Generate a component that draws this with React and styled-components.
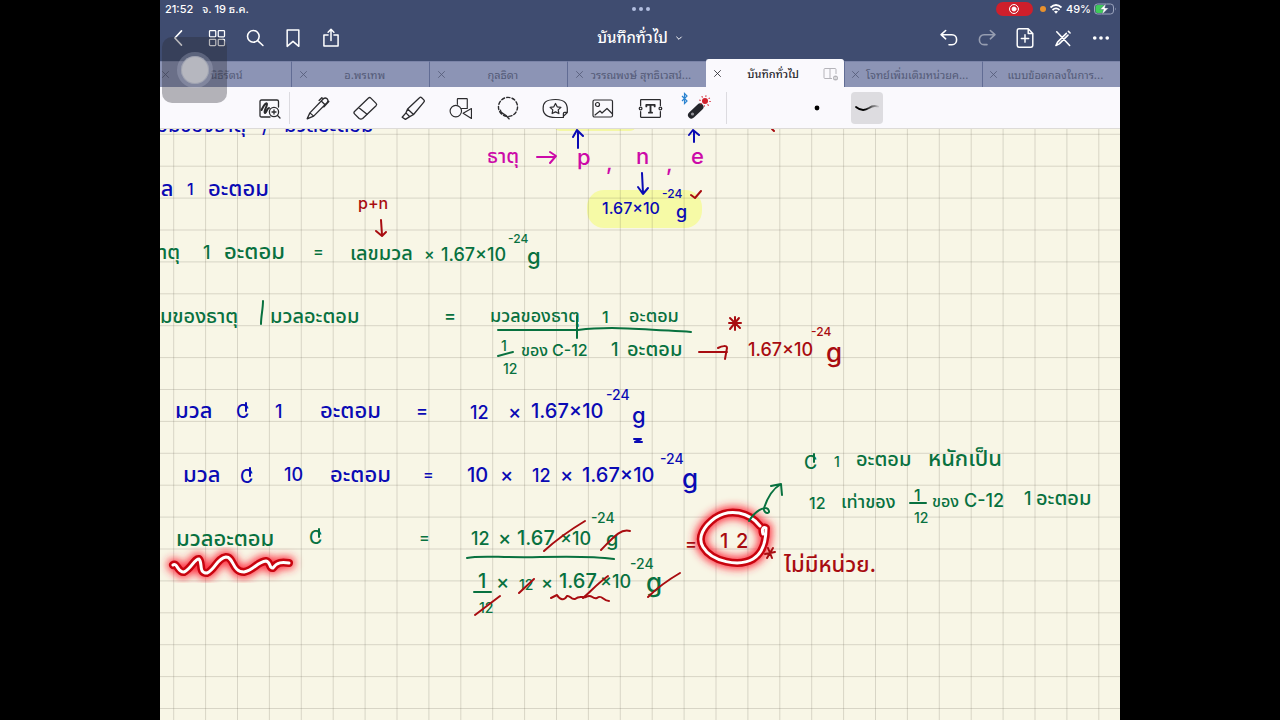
import React from 'react';
import styled, { createGlobalStyle } from 'styled-components';

const GlobalStyle = createGlobalStyle`
  * {
    box-sizing: border-box;
  }

  body {
    margin: 0;
    background: #000;
    font-family: Inter, "Noto Sans Thai Looped", "Noto Looped Thai", "Noto Sans Thai", "Noto Sans", sans-serif;
  }
`;

const Tablet = styled.div`
  position: relative;
  display: flex;
  flex-direction: column;
  width: 75%;
  height: 100vh;
  margin: 0 auto;
  overflow: hidden;
  background: #f8f6e6;
`;

const Header = styled.header`
  background: #3f4c70;
  color: #fff;
`;

const StatusBar = styled.div`
  display: grid;
  grid-template-columns: 1fr auto 1fr;
  align-items: center;
  height: 18px;
  padding: 0 3px 0 5px;
  font-size: 11px;
  font-weight: 500;
  line-height: 18px;
`;

const Clock = styled.div`
  display: flex;
  gap: 9px;
  white-space: nowrap;
`;

const Dots = styled.div`
  display: flex;
  gap: 3px;

  i {
    width: 4px;
    height: 4px;
    border-radius: 50%;
    background: #b3bfe0;
  }
`;

const Indicators = styled.div`
  display: flex;
  align-items: center;
  justify-content: flex-end;
  gap: 3px;
`;

const RecordPill = styled.div`
  display: flex;
  align-items: center;
  justify-content: center;
  width: 37px;
  height: 14px;
  margin-right: 4px;
  border-radius: 7px;
  background: #cf1f2b;
`;

const MicDot = styled.i`
  width: 6px;
  height: 6px;
  border-radius: 50%;
  background: #e8912d;
`;

const NavBar = styled.div`
  display: grid;
  grid-template-columns: 1fr auto 1fr;
  align-items: center;
  height: 40px;
`;

const NavGroup = styled.div`
  display: flex;
  justify-content: ${({ $end }) => ($end ? 'flex-end' : 'flex-start')};
`;

const PlainButton = styled.button`
  display: flex;
  align-items: center;
  justify-content: center;
  margin: 0;
  padding: 0;
  border: 0;
  background: none;
  color: inherit;
  font: inherit;
`;

const NavButton = styled(PlainButton)`
  width: 38px;
  height: 38px;
  opacity: ${({ disabled }) => (disabled ? 0.45 : 1)};
  color: #fff;
`;

const TitleButton = styled(PlainButton)`
  gap: 7px;
  font-size: 15px;
  font-weight: 500;
  line-height: 38px;
`;

const Tabs = styled.nav`
  display: flex;
  align-items: flex-end;
  height: 29px;
  margin-left: -7px;
`;

const Tab = styled.div`
  display: flex;
  flex: 1;
  align-items: center;
  min-width: 0;
  height: ${({ $active }) => ($active ? '28px' : '26px')};
  padding: 0 5px;
  border-left: 1px solid ${({ $active }) => ($active ? '#faf9fd' : '#616c94')};
  border-top: 1px solid ${({ $active }) => ($active ? '#faf9fd' : '#7b84a8')};
  border-radius: ${({ $active }) => ($active ? '3px 3px 0 0' : '0')};
  background: ${({ $active }) => ($active ? '#faf9fd' : '#8c94b5')};
  color: ${({ $active }) => ($active ? '#26262c' : '#545b78')};
`;

const TabClose = styled(PlainButton)`
  width: 12px;
  height: 20px;
`;

const TabTitle = styled.a`
  flex: 1;
  min-width: 0;
  color: inherit;
  font-size: 11px;
  font-weight: ${({ $active }) => ($active ? 500 : 400)};
  line-height: 22px;
  text-align: center;
  text-decoration: none;
  white-space: nowrap;
`;

const TabSide = styled.span`
  display: flex;
  width: ${({ $wide }) => ($wide ? '16px' : '4px')};
`;

const Toolbar = styled.div`
  display: flex;
  align-items: center;
  height: 42px;
  padding-top: 1px;
  border-bottom: 1px solid #dddbd8;
  background: #faf9fd;
  color: #2b2b2e;
`;

const ZoomTool = styled(PlainButton)`
  width: 38px;
  height: 40px;
  margin-left: 91px;
`;

const Divider = styled.i`
  width: 1px;
  height: 32px;
  background: #dcdbe0;
`;

const Tools = styled.div`
  display: flex;
  width: 428px;
  margin: 0 4px;
`;

const ToolButton = styled(PlainButton)`
  flex: 1;
  height: 40px;
`;

const StrokeStyles = styled.div`
  display: flex;
  align-items: center;
  gap: 18px;
  margin-left: 74px;
`;

const StyleButton = styled(PlainButton)`
  width: 32px;
  height: 32px;
  border-radius: 4px;
  background: ${({ $active }) => ($active ? '#dddce0' : 'none')};
`;

const Page = styled.main`
  flex: 1;
  min-height: 0;
`;

const Paper = styled.svg`
  display: block;
  width: 100%;
  height: 100%;
`;

const Written = styled.text`
  fill: ${({ $ink }) => $ink};
  font-family: Inter, "Noto Sans Thai", "Noto Sans", sans-serif;
  font-size: ${({ $size }) => $size}px;
  font-weight: 500;
`;

const Stroke = styled.path`
  fill: none;
  stroke: ${({ $ink }) => $ink};
  stroke-width: ${({ $width }) => $width || 2};
  stroke-linecap: round;
  stroke-linejoin: round;
`;

const AssistiveTouch = styled.button`
  position: absolute;
  top: 37px;
  left: 2px;
  display: flex;
  align-items: center;
  justify-content: center;
  width: 65px;
  height: 66px;
  padding: 0;
  border: 0;
  border-radius: 10px;
  background: rgba(40, 40, 50, 0.34);
`;

const TouchRing = styled.span`
  width: 36px;
  height: 36px;
  border: 4px solid rgba(190, 195, 215, 0.28);
  border-radius: 50%;
  background: #b6b7bf;
  background-clip: padding-box;
  box-shadow: inset 0 0 0 1px rgba(140, 145, 165, 0.5);
`;

const Icon = ({ size = 24, width = 1.5, children }) => (
  <svg width={size} height={size} viewBox="0 0 24 24" fill="none" stroke="currentColor"
    strokeWidth={width} strokeLinecap="round" strokeLinejoin="round" aria-hidden="true">
    {children}
  </svg>
);

const BLUE = '#0a0ab4';
const GREEN = '#08713f';
const PINK = '#cc0aa8';
const RED = '#a80c10';

// text, x, baseline, size, ink
const notes = [
  ['มวลอะตอมของธาตุ', 91, 132, 20, BLUE],
  ['/', 262, 133, 18, BLUE],
  ['มวลอะตอม', 284, 132, 20, BLUE],
  ['มวล', 136, 196, 22, BLUE],
  ['1', 187, 195, 16, BLUE],
  ['อะตอม', 208, 196, 22, BLUE],
  ['ธาตุ', 487, 163, 20, PINK],
  ['p', 577, 165, 22, PINK],
  [',', 606, 170, 22, PINK],
  ['n', 636, 164, 22, PINK],
  [',', 666, 171, 22, PINK],
  ['e', 691, 164, 22, PINK],
  ['1.67×10', 602, 214, 16, BLUE],
  ['-24', 662, 198, 12, BLUE],
  ['g', 676, 218, 18, BLUE],
  ['p+n', 358, 209, 16, RED],
  ['ธาตุ', 148, 259, 20, GREEN],
  ['1', 203, 259, 18, GREEN],
  ['อะตอม', 224, 259, 22, GREEN],
  ['=', 313, 257, 16, GREEN],
  ['เลขมวล', 350, 260, 20, GREEN],
  ['×', 424, 260, 16, GREEN],
  ['1.67×10', 441, 261, 18, GREEN],
  ['-24', 508, 243, 12, GREEN],
  ['g', 527, 264, 22, GREEN],
  ['อะตอมของธาตุ', 117, 323, 20, GREEN],
  ['มวลอะตอม', 270, 323, 20, GREEN],
  ['=', 444, 322, 18, GREEN],
  ['มวลของธาตุ', 490, 322, 18, GREEN],
  ['1', 602, 323, 16, GREEN],
  ['อะตอม', 629, 322, 18, GREEN],
  ['1', 501, 351, 14, GREEN],
  ['12', 503, 374, 14, GREEN],
  ['ของ', 521, 356, 16, GREEN],
  ['C-12', 552, 356, 16, GREEN],
  ['1', 611, 356, 18, GREEN],
  ['อะตอม', 627, 356, 20, GREEN],
  ['1.67×10', 748, 356, 18, RED],
  ['-24', 811, 336, 12, RED],
  ['g', 826, 362, 26, RED],
  ['มวล', 175, 418, 22, BLUE],
  ['C', 236, 418, 18, BLUE],
  ['1', 275, 418, 18, BLUE],
  ['อะตอม', 320, 418, 22, BLUE],
  ['=', 416, 417, 18, BLUE],
  ['12', 470, 419, 18, BLUE],
  ['×', 508, 419, 20, BLUE],
  ['1.67×10', 531, 418, 20, BLUE],
  ['-24', 606, 400, 14, BLUE],
  ['g', 632, 423, 22, BLUE],
  ['มวล', 183, 482, 22, BLUE],
  ['C', 240, 483, 18, BLUE],
  ['10', 284, 481, 18, BLUE],
  ['อะตอม', 330, 482, 22, BLUE],
  ['=', 423, 480, 16, BLUE],
  ['10', 467, 482, 20, BLUE],
  ['×', 500, 482, 20, BLUE],
  ['12', 532, 482, 18, BLUE],
  ['×', 560, 482, 20, BLUE],
  ['1.67×10', 582, 482, 20, BLUE],
  ['-24', 660, 464, 14, BLUE],
  ['g', 682, 488, 26, BLUE],
  ['มวลอะตอม', 176, 546, 22, GREEN],
  ['C', 309, 544, 18, GREEN],
  ['=', 419, 543, 16, GREEN],
  ['12', 471, 545, 18, GREEN],
  ['×', 498, 545, 20, GREEN],
  ['1.67', 517, 545, 20, GREEN],
  ['×10', 560, 545, 18, GREEN],
  ['-24', 591, 523, 14, GREEN],
  ['g', 606, 546, 20, GREEN],
  ['1', 478, 588, 20, GREEN],
  ['12', 479, 613, 14, GREEN],
  ['×', 496, 589, 20, GREEN],
  ['12', 519, 590, 14, GREEN],
  ['×', 541, 589, 18, GREEN],
  ['1.67', 559, 588, 20, GREEN],
  ['×10', 600, 588, 18, GREEN],
  ['-24', 630, 569, 14, GREEN],
  ['g', 646, 592, 26, GREEN],
  ['=', 685, 550, 18, RED],
  ['1', 720, 548, 20, RED],
  ['2', 736, 548, 20, RED],
  ['C', 804, 469, 18, GREEN],
  ['1', 834, 467, 14, GREEN],
  ['อะตอม', 856, 466, 20, GREEN],
  ['หนักเป็น', 928, 466, 22, GREEN],
  ['12', 809, 509, 16, GREEN],
  ['เท่าของ', 841, 508, 18, GREEN],
  ['1', 914, 501, 16, GREEN],
  ['12', 914, 523, 14, GREEN],
  ['ของ', 932, 507, 16, GREEN],
  ['C-12', 964, 507, 18, GREEN],
  ['1', 1024, 505, 18, GREEN],
  ['อะตอม', 1036, 505, 20, GREEN],
  ['ไม่มีหน่วย.', 784, 572, 22, RED],
];

const strokes = [
  [BLUE, 'M578 148V131M573 137L577 130L583 136'],
  [BLUE, 'M694 142V131M689 135L693 130L699 135'],
  [PINK, 'M537 157H555M550 152L556 156L550 163'],
  [BLUE, 'M642 173L643 193M638 187L643 194L648 188'],
  [RED, 'M691 195L695 198L701 191M772 129L774 131'],
  [RED, 'M381 220L382 235M376 231L382 236L386 232'],
  [GREEN, 'M263 301C263 309 261 316 261 324'],
  [GREEN, 'M498 330H578C610 326 640 329 691 332M577 316V338'],
  [GREEN, 'M498 356L513 352'],
  [RED, 'M699 352H727M718 348C722 346 727 345 727 348L725 359'],
  [RED, 'M730 318L740 328M739 318L730 329M729 323H741M735 317V330'],
  [BLUE, 'M634 439H641L635 442H642'],
  [GREEN, 'M467 558C480 555 500 558 540 557S600 557 614 559'],
  [GREEN, 'M474 592H491'],
  [RED, 'M544 551C555 541 570 530 585 521'],
  [RED, 'M601 550C612 539 620 528 630 531'],
  [RED, 'M475 615L500 596M519 593L534 579'],
  [RED, 'M583 598C590 592 597 584 608 576M648 597C656 589 668 580 680 573'],
  [RED, 'M551 598L557 595C560 600 564 601 567 596C570 595 571 600 575 599C580 595 582 598 586 597C592 593 592 600 597 598C602 594 603 601 609 601'],
  [GREEN, 'M749 521C755 511 764 506 768 509C772 515 763 514 764 508C768 496 774 488 781 484M771 486L781 484L782 495'],
  [GREEN, 'M910 503H926'],
  [RED, 'M765 554L775 552M768 548L772 558M773 548L767 558'],
  // crossbars on the carbon symbols
  [BLUE, 'M246 403V411M250 468V476'],
  [GREEN, 'M319 529V537M814 454V462'],
];

const laser = [
  'M173 565C177 562 178 573 184 572C191 569 195 558 199 559C203 563 198 573 207 573C215 570 217 558 226 557C234 557 232 572 244 572C254 570 257 562 266 561C271 562 269 569 273 568C277 562 282 562 289 563',
  'M760 526C749 512 730 508 715 518C704 526 697 537 703 547C712 562 739 567 753 559C763 553 766 541 766 528C762 526 762 531 763 534',
];

// squares of the page, drawn well past the edges of a wide window
const GRID_STEP = 31.9;
const gridPath = Array.from({ length: 80 }, (_, i) => {
  const x = 13.7 + i * GRID_STEP;
  const y = 5.3 + i * GRID_STEP;
  return `M${x} 0V2600M0 ${y}H2600`;
}).join('');

const ZoomIcon = () => (
  <Icon size={24} width={1.3}>
    <path d="M12 21H3.500Q2 21 2 19.500V5.500Q2 4 3.500 4H19Q20.500 4 20.500 5.500V11" />
    <path d="M3.500 14C6 9 8 6 9 8C9 11 5 16 7 17C9 16 9 12 11 12" strokeWidth="2" />
    <circle cx="16" cy="16" r="4.600" />
    <path d="M19.500 19.500L22 22M16 14V18M14 16H18" />
  </Icon>
);

const tools = [
  ['Pen', (
    <Icon size={26} width={1.2}>
      <path d="M2 22L4.500 16.500L17 3.500Q18.500 2 20.500 3.500Q22 5.500 20.500 7L8 19.500L2 22ZM15 5.500L18.500 9M4.500 16.500L8 19.500M13 5L15.500 2.500L17 3.500M22 6L17.500 11" />
    </Icon>
  )],
  ['Eraser', (
    <Icon size={28} width={1.1}>
      <path d="M3 15L15 3.500Q16 2.500 17 3.500L21.500 8Q22.500 9 21.500 10L10 21Q8.500 22 7 21L3 17Q2 16 3 15ZM6.500 11.500L14 17.500" />
    </Icon>
  )],
  ['Highlighter', (
    <Icon size={26} width={1.2}>
      <path d="M7 13L18 2.500Q19 1.500 20 2.500L22 4.500Q23 5.500 22 6.500L12.500 18M7 13L12.500 18M7 13L5.500 16.500L9 20L12.500 18M5.500 16.500L2 20.500L5 22.500L9 20" />
    </Icon>
  )],
  ['Shapes', (
    <Icon size={25} width={1.1}>
      <path d="M9 8V3Q9 2.500 9.500 2.500H18Q18.500 2.500 18.500 3V12H13" />
      <circle cx="7.500" cy="14.500" r="5.500" />
      <path d="M14.500 16.500L22.500 12V21.500Z" />
    </Icon>
  )],
  ['Lasso', (
    <Icon size={26} width={1.3}>
      <circle cx="12" cy="11" r="8.800" strokeDasharray="3 2" />
      <path d="M5 14C5 18 9 16 13 22" />
    </Icon>
  )],
  ['Elements', (
    <Icon size={27} width={1.1}>
      <path d="M19 19L22.500 15.500C23 8 21 4 12 4S1 7 1 12S4 20 12 20H19V16.500Q19 15.500 20 15.500H22.500" />
      <path d="M12 7.500L13.500 10.500L16.800 11L14.400 13.200L15 16.500L12 15L9 16.500L9.600 13.200L7.200 11L10.500 10.500Z" />
    </Icon>
  )],
  ['Image', (
    <Icon size={24} width={1.2}>
      <rect x="2" y="4" width="19.500" height="17" rx="1.500" />
      <circle cx="6.500" cy="8.500" r="2" />
      <path d="M4 19L9 15L11 17L16 12.500L21 17.500" />
    </Icon>
  )],
  ['Text', (
    <Icon size={25} width={1.2}>
      <path d="M2.500 9V4Q2.500 3.500 3 3.500H21Q21.500 3.500 21.500 4V9M2.500 15V20Q2.500 20.500 3 20.500H21Q21.500 20.500 21.500 20V15" />
      <circle cx="2.500" cy="12" r="1.300" />
      <circle cx="21.500" cy="12" r="1.300" />
      <path d="M8 10V8.500H16V10M12 8.500V16M10.500 16H13.500" strokeWidth="1.800" />
    </Icon>
  )],
  ['Laser pointer', (
    <svg width="36" height="32" viewBox="0 0 36 32" fill="none" aria-hidden="true">
      <path d="M2 4L7 9L4.500 11.500V1.500L7 4L2 9" stroke="#2a83d0" strokeWidth="1.200" />
      <path d="M11.500 23L20 15" stroke="#25262c" strokeWidth="7" strokeLinecap="round" />
      <circle cx="12.500" cy="22" r="1.600" fill="#93949a" />
      <circle cx="25" cy="9" r="3" fill="#d2202c" />
      <circle cx="25" cy="9" r="5" stroke="#d2202c" strokeWidth="1.500" strokeDasharray="1 2.900" />
    </svg>
  )],
];

const tabs = [
  'นิธิรัตน์',
  'อ.พรเทพ',
  'กุลธิดา',
  'วรรณพงษ์ สุทธิเวสน์...',
  'บันทึกทั่วไป',
  'โจทย์เพิ่มเติมหน่วยค...',
  'แบบข้อตกลงในการ...',
];

const Notebook = () => (
  <Page>
    <Paper>
      <defs>
        <filter id="glow" x="-30%" y="-60%" width="160%" height="220%">
          <feGaussianBlur stdDeviation="4" />
        </filter>
      </defs>
      <rect x="394" y="-10" width="82" height="12" rx="6" fill="#f4f7a6" />
      <rect x="427" y="61" width="115" height="38" rx="17" fill="#f6faa6" />
      <Stroke d={gridPath} $ink="rgba(90, 85, 70, 0.2)" $width={1} />
      <g transform="translate(-160 -129)">
        {laser.map((d) => (
          <g key={d}>
            <Stroke d={d} $ink="#ff2a3c" $width={12} filter="url(#glow)" />
            <Stroke d={d} $ink="#c8040f" $width={8} />
            <Stroke d={d} $ink="#fff" $width={3} />
          </g>
        ))}
        {notes.map(([text, x, y, size, ink]) => (
          <Written key={`${x}-${y}`} x={x} y={y} $size={size} $ink={ink}>{text}</Written>
        ))}
        {strokes.map(([ink, d]) => (
          <Stroke key={d} d={d} $ink={ink} />
        ))}
      </g>
    </Paper>
  </Page>
);

const App = () => (
  <Tablet>
    <GlobalStyle />
    <Header>
      <StatusBar>
        <Clock><span>21:52</span><span>จ. 19 ธ.ค.</span></Clock>
        <Dots><i /><i /><i /></Dots>
        <Indicators>
          <RecordPill>
            <Icon size={12} width={2}><circle cx="12" cy="12" r="9" /><circle cx="12" cy="12" r="4" fill="#fff" /></Icon>
          </RecordPill>
          <MicDot />
          <svg width="14" height="12" viewBox="0 0 14 12" fill="none" stroke="#fff" strokeWidth="1.800" aria-hidden="true">
            <path d="M1.500 4.500Q7 -0.500 12.500 4.500M3.500 7Q7 3.800 10.500 7" />
            <path d="M5 8.500Q7 7 9 8.500L7 10.800Z" fill="#fff" stroke="none" />
          </svg>
          <span>49%</span>
          <svg width="23" height="12" viewBox="0 0 23 12" aria-hidden="true">
            <rect x="0.500" y="1" width="19" height="10" rx="3" fill="none" stroke="#9aa3bd" />
            <path d="M21 4.500Q22.500 6 21 7.500Z" fill="#9aa3bd" />
            <rect x="1.500" y="2" width="9" height="8" rx="2" fill="#3ecb5a" />
            <path d="M12 0.500L6 6.500H9.500L8 11.500L14.500 5H10.800Z" fill="#fff" stroke="#3f4c70" strokeWidth="0.400" />
          </svg>
        </Indicators>
      </StatusBar>
      <NavBar>
        <NavGroup>
          <NavButton aria-label="Back"><Icon size={20}><path d="M15 3.500L7 12L15 20.500" strokeWidth="1.900" /></Icon></NavButton>
          <NavButton aria-label="Thumbnails">
            <Icon size={20}>
              <rect x="3" y="3" width="7.500" height="7.500" rx="1" />
              <rect x="13.500" y="3" width="7.500" height="7.500" rx="1" />
              <rect x="3" y="13.500" width="7.500" height="7.500" rx="1" />
              <rect x="13.500" y="13.500" width="7.500" height="7.500" rx="1" />
            </Icon>
          </NavButton>
          <NavButton aria-label="Search">
            <Icon size={20} width={1.9}><circle cx="10" cy="10" r="7" /><path d="M15.500 15.500L21.500 21" /></Icon>
          </NavButton>
          <NavButton aria-label="Bookmark">
            <Icon size={20} width={1.8}><path d="M5 2.500H19V22L12 16L5 22Z" /></Icon>
          </NavButton>
          <NavButton aria-label="Share">
            <Icon size={20} width={1.8}><path d="M8.500 8.500H3.500V21.500H20.500V8.500H15.500M12 15V2M8.500 5L12 1.500L15.500 5" /></Icon>
          </NavButton>
        </NavGroup>
        <TitleButton>
          บันทึกทั่วไป
          <Icon size={8} width={3}><path d="M5 9L12 16L19 9" /></Icon>
        </TitleButton>
        <NavGroup $end>
          <NavButton aria-label="Undo">
            <Icon size={20} width={1.9}><path d="M8 3L2.500 8L8 13M3 8H15.500C23 8 23 20 15.500 20H12" /></Icon>
          </NavButton>
          <NavButton aria-label="Redo" disabled>
            <Icon size={20} width={1.9}><path d="M16 3L21.500 8L16 13M21 8H8.500C1 8 1 20 8.500 20H12" /></Icon>
          </NavButton>
          <NavButton aria-label="Add page">
            <Icon size={22} width={1.6}>
              <path d="M15.500 2H5.500Q3.500 2 3.500 4V20Q3.500 22 5.500 22H18.500Q20.500 22 20.500 20V7ZM15.500 2V7H20.500M12 8.500V16.500M8 12.500H16" />
            </Icon>
          </NavButton>
          <NavButton aria-label="Read only mode">
            <Icon size={20} width={1.9}>
              <path d="M4.500 4.500L20 21M3.500 21L5.500 17L16 6.500M3.500 21L7.500 19L18 8.500M18.500 4L20.500 6" />
            </Icon>
          </NavButton>
          <NavButton aria-label="More">
            <Icon size={20} width={0}>
              <g fill="#fff"><circle cx="4.500" cy="12" r="2.200" /><circle cx="12" cy="12" r="2.200" /><circle cx="19.500" cy="12" r="2.200" /></g>
            </Icon>
          </NavButton>
        </NavGroup>
      </NavBar>
      <Tabs>
        {tabs.map((title, i) => (
          <Tab key={title} $active={i === 4}>
            <TabClose aria-label={`Close ${title}`}><Icon size={9} width={2.2}><path d="M4 4L20 20M20 4L4 20" /></Icon></TabClose>
            <TabTitle href="#" $active={i === 4}>{title}</TabTitle>
            <TabSide $wide={i === 4}>
              {i === 4 && (
                <svg width="16" height="14" viewBox="0 0 16 14" fill="none" stroke="#b5b4ba" aria-hidden="true">
                  <path d="M9 11.500H2Q1 11.500 1 10.500V2.500Q1 1.500 2 1.500H12Q13 1.500 13 2.500V7M7 1.500V11.500" />
                  <circle cx="12.500" cy="11" r="2.500" fill="#b5b4ba" stroke="none" />
                  <path d="M11 11H14" stroke="#fff" />
                </svg>
              )}
            </TabSide>
          </Tab>
        ))}
      </Tabs>
    </Header>
    <Toolbar>
      <ZoomTool aria-label="Zoom window"><ZoomIcon /></ZoomTool>
      <Divider />
      <Tools>
        {tools.map(([label, icon]) => (
          <ToolButton key={label} aria-label={label}>{icon}</ToolButton>
        ))}
      </Tools>
      <Divider />
      <StrokeStyles>
        <StyleButton aria-label="Dot">
          <svg width="6" height="6" viewBox="0 0 6 6"><circle cx="3" cy="3" r="2.400" fill="#000" /></svg>
        </StyleButton>
        <StyleButton aria-label="Line" $active>
          <svg width="24" height="10" viewBox="0 0 24 10">
            <defs>
              <linearGradient id="fade">
                <stop offset="0.400" stopColor="#000" />
                <stop offset="1" stopColor="#000" stopOpacity="0.150" />
              </linearGradient>
            </defs>
            <path d="M1 4C7 9 11 7 14 5Q18 2 23 3.500" fill="none" stroke="url(#fade)" strokeWidth="1.800" strokeLinecap="round" />
          </svg>
        </StyleButton>
      </StrokeStyles>
    </Toolbar>
    <Notebook />
    <AssistiveTouch aria-label="AssistiveTouch"><TouchRing /></AssistiveTouch>
  </Tablet>
);

export default App;
